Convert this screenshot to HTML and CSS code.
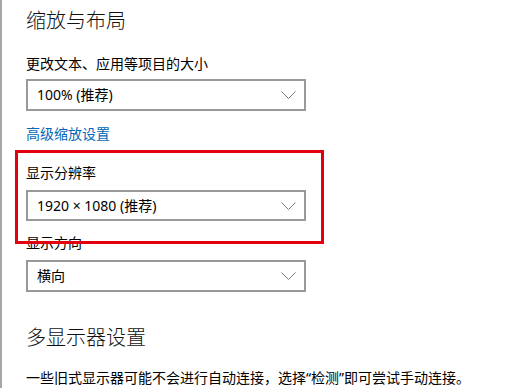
FILE: index.html
```html
<!DOCTYPE html>
<html lang="zh-CN">
<head>
<meta charset="utf-8">
<title>缩放与布局</title>
<link rel="stylesheet" href="styles.css">
</head>
<body>
<div class="page">
  <h1 class="title">缩放与布局</h1>
  <div class="label first">更改文本、应用等项目的大小</div>
  <div class="select"><span class="value">100% (推荐)</span><svg class="chev" width="15" height="8" viewBox="0 0 15 8"><path d="M0.5 0.5 L7.5 7.5 L14.5 0.5" fill="none" stroke="#7a7a7a" stroke-width="1"/></svg></div>
  <a class="link" href="#">高级缩放设置</a>
  <div class="label second">显示分辨率</div>
  <div class="select"><span class="value">1920 × 1080 (推荐)</span><svg class="chev" width="15" height="8" viewBox="0 0 15 8"><path d="M0.5 0.5 L7.5 7.5 L14.5 0.5" fill="none" stroke="#7a7a7a" stroke-width="1"/></svg></div>
  <div class="label third">显示方向</div>
  <div class="select"><span class="value">横向</span><svg class="chev" width="15" height="8" viewBox="0 0 15 8"><path d="M0.5 0.5 L7.5 7.5 L14.5 0.5" fill="none" stroke="#7a7a7a" stroke-width="1"/></svg></div>
  <h2 class="title second-title">多显示器设置</h2>
  <p class="desc">一些旧式显示器可能不会进行自动连接，选择“检测”即可尝试手动连接。</p>
  <div class="highlight"></div>
</div>
</body>
</html>
```

FILE: styles.css
```css
html, body {
  margin: 0;
  padding: 0;
  background: #ffffff;
}
body {
  font-family: "Segoe UI", "Noto Sans", "Noto Sans CJK SC", sans-serif;
  color: #000;
  overflow: hidden;
  height: 388px;
}
.page {
  position: relative;
  height: 388px;
  box-sizing: border-box;
  border-left: 2px solid #a6a6a6;
  padding-left: 24px;
  display: flex;
  flex-direction: column;
  align-items: flex-start;
}
.title {
  margin: 6px 0 0 0;
  font-size: 20px;
  line-height: 28px;
  font-weight: 300;
  font-family: "Noto Sans CJK SC", sans-serif;
  color: #111;
}
.second-title {
  margin-top: 31px;
}
.label {
  font-size: 14px;
  line-height: 20px;
  font-family: "Noto Sans CJK SC", sans-serif;
}
.label.first { margin-top: 19px; }
.label.second { margin-top: 19px; }
.label.third { margin-top: 11px; }
.select {
  box-sizing: border-box;
  width: 280px;
  height: 32px;
  border: 2px solid #999999;
  display: flex;
  align-items: center;
  justify-content: space-between;
  padding: 0 8px 0 9px;
  margin-top: 6px;
  font-size: 14px;
}
.label.second + .select,
.label.third + .select { margin-top: 8px; }
.value {
  line-height: 20px;
}
.chev {
  display: block;
}
.link {
  margin-top: 12px;
  font-size: 14px;
  line-height: 20px;
  color: #0068b8;
  text-decoration: none;
  font-family: "Noto Sans CJK SC", sans-serif;
}
.desc {
  margin: 17px 0 0 0;
  font-size: 14px;
  line-height: 20px;
  white-space: nowrap;
  font-family: "Noto Sans", "Noto Sans CJK SC", sans-serif;
}
.highlight {
  position: absolute;
  left: 13px;
  top: 150px;
  width: 309px;
  height: 94px;
  box-sizing: border-box;
  border: 3px solid #e3000e;
}
```
